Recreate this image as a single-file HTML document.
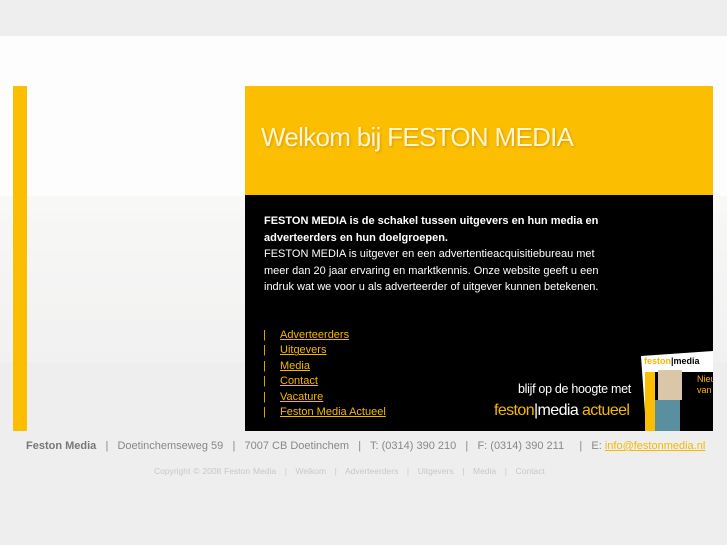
<!DOCTYPE html>
<html><head><style>
body{margin:0;width:727px;height:545px;background:#eeeeee;font-family:"Liberation Sans",sans-serif;position:relative;overflow:hidden}
.a{position:absolute}
a{color:#f5b800}
</style></head><body>
<div class="a" style="left:0;top:0;width:727px;height:36px;background:#eeeeee"></div>
<div class="a" style="left:0;top:36px;width:727px;height:160px;background:#fdfdfd"></div>
<div class="a" style="left:0;top:196px;width:727px;height:16px;background:#f8f8f7"></div>
<div class="a" style="left:0;top:212px;width:727px;height:150px;background:linear-gradient(#f7f7f6,#f1f1f1)"></div>
<div class="a" style="left:13px;top:86px;width:14px;height:345px;background:#fcbe00"></div>
<div class="a" style="left:245px;top:86px;width:468px;height:109px;background:#fcbe00"></div>
<div class="a" style="left:261px;top:122px;font-size:26px;color:#fff5d0;letter-spacing:-0.7px;font-family:'Liberation Sans',sans-serif;text-shadow:1px 1px 2px rgba(150,100,0,.4)">Welkom bij FESTON MEDIA</div>
<div class="a" style="left:245px;top:195px;width:468px;height:236px;background:#000"></div>
<div class="a" style="left:264px;top:213px;width:345px;font-size:11px;line-height:16.5px;color:#fff"><b>FESTON MEDIA is de schakel tussen uitgevers en hun media en adverteerders en hun doelgroepen.</b><br>FESTON MEDIA is uitgever en een advertentieacquisitiebureau met meer dan 20 jaar ervaring en marktkennis. Onze website geeft u een indruk wat we voor u als adverteerder of uitgever kunnen betekenen.</div>
<div class="a" style="left:263px;top:328px;font-size:11px;line-height:15.4px;color:#f5b800">
<div><span style="display:inline-block;width:17px">|</span><a href="#">Adverteerders</a></div>
<div><span style="display:inline-block;width:17px">|</span><a href="#">Uitgevers</a></div>
<div><span style="display:inline-block;width:17px">|</span><a href="#">Media</a></div>
<div><span style="display:inline-block;width:17px">|</span><a href="#">Contact</a></div>
<div><span style="display:inline-block;width:17px">|</span><a href="#">Vacature</a></div>
<div><span style="display:inline-block;width:17px">|</span><a href="#">Feston Media Actueel</a></div>
</div>
<div class="a" style="left:518px;top:382px;font-size:12.5px;color:#fff;letter-spacing:-0.3px">blijf op de hoogte met</div>
<div class="a" style="left:494px;top:402px;font-size:16px;color:#f5b800;letter-spacing:-0.6px">feston<span style="color:#fff">|media</span> actueel</div>
<div class="a" style="left:640px;top:350px;width:73px;height:81px;overflow:hidden">
<div class="a" style="left:1px;top:6px;width:80px;height:85px;background:#fff;transform:rotate(-4deg);transform-origin:left top"></div>
<div class="a" style="left:4px;top:6px;font-size:9px;color:#f5b800;font-weight:bold">feston<span style="color:#000">|media</span></div>
<div class="a" style="left:5px;top:22px;width:70px;height:60px;background:#000"></div>
<div class="a" style="left:5px;top:22px;width:10px;height:60px;background:#fcbe00"></div>
<div class="a" style="left:18px;top:20px;width:24px;height:30px;background:#d9c7a8"></div>
<div class="a" style="left:15px;top:50px;width:25px;height:31px;background:#5a8fa0"></div>
<div class="a" style="left:57px;top:24px;font-size:9px;color:#f5b800;line-height:11px">Nieu<br>van</div>
</div>
<div class="a" style="left:26px;top:440px;font-size:11px;color:#888;white-space:nowrap"><b style="color:#777">Feston Media</b> &nbsp; | &nbsp; Doetinchemseweg 59 &nbsp; | &nbsp; 7007 CB Doetinchem &nbsp; | &nbsp; T: (0314) 390 210 &nbsp; | &nbsp; F: (0314) 390 211 &nbsp; &nbsp; | &nbsp; E: <a href="#" style="color:#f5b800">info@festonmedia.nl</a></div>
<div class="a" style="left:154px;top:466px;font-size:8.5px;color:#c8c8c8;white-space:nowrap;word-spacing:0.5px">Copyright © 2008 Feston Media &nbsp; | &nbsp; Welkom &nbsp; | &nbsp; Adverteerders &nbsp; | &nbsp; Uitgevers &nbsp; | &nbsp; Media &nbsp; | &nbsp; Contact</div>
</body></html>
